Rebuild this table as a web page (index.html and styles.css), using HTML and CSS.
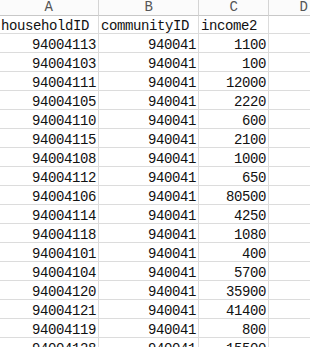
FILE: index.html
```html
<!DOCTYPE html>
<html>
<head>
<meta charset="utf-8">
<link rel="stylesheet" href="styles.css">
</head>
<body>
<div class="view">
<div class="sheet">
  <div class="hd">A</div><div class="hd">B</div><div class="hd">C</div><div class="hd">D</div>
  <div class="c">householdID</div><div class="c">communityID</div><div class="c">income2</div><div class="c"></div>
  <div class="c n">94004113</div><div class="c n">940041</div><div class="c n">1100</div><div class="c"></div>
  <div class="c n">94004103</div><div class="c n">940041</div><div class="c n">100</div><div class="c"></div>
  <div class="c n">94004111</div><div class="c n">940041</div><div class="c n">12000</div><div class="c"></div>
  <div class="c n">94004105</div><div class="c n">940041</div><div class="c n">2220</div><div class="c"></div>
  <div class="c n">94004110</div><div class="c n">940041</div><div class="c n">600</div><div class="c"></div>
  <div class="c n">94004115</div><div class="c n">940041</div><div class="c n">2100</div><div class="c"></div>
  <div class="c n">94004108</div><div class="c n">940041</div><div class="c n">1000</div><div class="c"></div>
  <div class="c n">94004112</div><div class="c n">940041</div><div class="c n">650</div><div class="c"></div>
  <div class="c n">94004106</div><div class="c n">940041</div><div class="c n">80500</div><div class="c"></div>
  <div class="c n">94004114</div><div class="c n">940041</div><div class="c n">4250</div><div class="c"></div>
  <div class="c n">94004118</div><div class="c n">940041</div><div class="c n">1080</div><div class="c"></div>
  <div class="c n">94004101</div><div class="c n">940041</div><div class="c n">400</div><div class="c"></div>
  <div class="c n">94004104</div><div class="c n">940041</div><div class="c n">5700</div><div class="c"></div>
  <div class="c n">94004120</div><div class="c n">940041</div><div class="c n">35900</div><div class="c"></div>
  <div class="c n">94004121</div><div class="c n">940041</div><div class="c n">41400</div><div class="c"></div>
  <div class="c n">94004119</div><div class="c n">940041</div><div class="c n">800</div><div class="c"></div>
  <div class="c n">94004128</div><div class="c n">940041</div><div class="c n">15500</div><div class="c"></div>
</div>
</div>
</body>
</html>
```
FILE: styles.css
```css
html, body {
  margin: 0;
  padding: 0;
  background: #ffffff;
  overflow: hidden;
}
.view {
  width: 310px;
  height: 347px;
  overflow: hidden;
}
.sheet {
  display: grid;
  grid-template-columns: 100px 100px 70px 70px;
  grid-template-rows: 16px 18px;
  grid-auto-rows: 19px;
  margin-left: -1px;
  font-family: "Liberation Mono", monospace;
  font-size: 14px;
  letter-spacing: -0.4px;
  color: #111;
}
.hd {
  box-sizing: border-box;
  border-right: 1px solid #d4d4d4;
  border-bottom: 1px solid #c8c8c8;
  background: #fbfbfb;
  color: #555;
  display: flex;
  align-items: flex-end;
  justify-content: center;
  line-height: 12px;
  padding-bottom: 2px;
}
.c {
  box-sizing: border-box;
  border-right: 1px solid #dcdcdc;
  border-bottom: 1px solid #dcdcdc;
  display: flex;
  align-items: flex-end;
  line-height: 12px;
  padding: 0 2px 1px 2px;
  white-space: nowrap;
  overflow: hidden;
}
.n {
  justify-content: flex-end;
}
```
